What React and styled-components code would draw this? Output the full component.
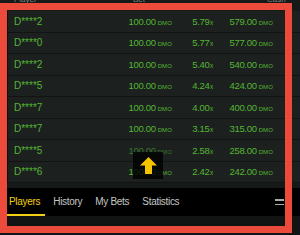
import React from "react";
import styled, { createGlobalStyle } from "styled-components";

const Global = createGlobalStyle`
  html, body { margin:0; padding:0; background:#151918; }
  body { font-family:"Liberation Sans",Arial,sans-serif; }
`;

const Page = styled.div`
  position:relative;
  width:300px;
  height:235px;
  overflow:hidden;
  background:#151918;
  display:flex;
  flex-direction:column;
`;

const HeadRow = styled.div`
  height:11px;
  display:flex;
  padding-left:14px;
  font-size:8px;
  line-height:8px;
  color:#7d8280;
  overflow:hidden;
`;

const HeadCell = styled.span`
  width:${p => p.w}px;
  margin-top:-4px;
`;

const Panel = styled.div`
  margin-left:7px;
  border-left:1px solid #0a0c0b;
  display:flex;
  flex-direction:column;
`;

const Row = styled.div`
  height:21.5px;
  box-sizing:border-box;
  border-bottom:1px solid #111413;
  background:#1c2120;
  display:grid;
  grid-template-columns:98px 60px 41px 60px;
  padding-left:6px;
  align-items:center;
  color:#55b533;
  font-size:9.5px;
  letter-spacing:-0.3px;
`;

const Cell = styled.span`
  text-align:${p => p.right ? "right" : "left"};
  white-space:nowrap;
  font-size:${p => p.name ? "10px" : "inherit"};
  letter-spacing:${p => p.name ? "0" : "inherit"};
  opacity:${p => p.dim ? 0.55 : 1};
`;

const Unit = styled.span`
  font-size:6px;
  margin-left:2px;
  letter-spacing:0.1px;
`;

const X = styled.span`
  font-size:6.5px;
  margin-left:0.5px;
`;

const Gap = styled.div`
  height:5px;
`;

const TabBar = styled.div`
  height:28px;
  background:#000;
  display:flex;
  align-items:center;
  gap:13px;
  padding-left:9px;
`;

const Tab = styled.span`
  position:relative;
  font-size:10px;
  letter-spacing:-0.3px;
  color:${p => p.active ? "#f2cf12" : "#c4c6c5"};
  line-height:28px;
  &::after{
    content:"";
    display:${p => p.active ? "block" : "none"};
    position:absolute;
    left:-5px;
    right:-5px;
    bottom:0;
    height:2px;
    background:#f2cf12;
  }
`;

const Burger = styled.div`
  margin-left:auto;
  margin-right:16px;
  width:9px;
  display:flex;
  flex-direction:column;
  gap:3px;
  span{ display:block; height:1.5px; background:#a9abaa; }
`;

const Bottom = styled.div`
  flex:1;
  background:#121414;
`;

const Frame = styled.div`
  position:absolute;
  left:0;
  top:3px;
  width:292px;
  height:230px;
  box-sizing:border-box;
  border:7px solid #ec4a3b;
  pointer-events:none;
`;

const Cursor = styled.div`
  position:absolute;
  left:133px;
  top:152px;
  width:30px;
  height:27px;
  background:rgba(0,0,0,0.82);
  display:flex;
  align-items:center;
  justify-content:center;
`;

const rows = [
  ["D****2","5.79","579.00"],
  ["D****0","5.77","577.00"],
  ["D****2","5.40","540.00"],
  ["D****5","4.24","424.00"],
  ["D****7","4.00","400.00"],
  ["D****7","3.15","315.00"],
  ["D****5","2.58","258.00"],
  ["D****6","2.42","242.00"],
];

export default function App(){
  return(
    <>
      <Global/>
      <Page>
        <HeadRow>
          <HeadCell w={119}>Player</HeadCell>
          <HeadCell w={134}>Bet</HeadCell>
          <HeadCell w={30}>Cash</HeadCell>
        </HeadRow>
        <Panel>
          {rows.map((r,i)=>(
            <Row key={i}>
              <Cell name>{r[0]}</Cell>
              <Cell right dim={i===6}>100.00<Unit>DMO</Unit></Cell>
              <Cell right>{r[1]}<X>x</X></Cell>
              <Cell right>{r[2]}<Unit>DMO</Unit></Cell>
            </Row>
          ))}
        </Panel>
        <Gap/>
        <TabBar>
          <Tab active>Players</Tab>
          <Tab>History</Tab>
          <Tab>My Bets</Tab>
          <Tab>Statistics</Tab>
          <Burger><span/><span/></Burger>
        </TabBar>
        <Bottom/>
        <Cursor>
          <svg width="17" height="17" viewBox="0 0 17 17">
            <path d="M8.5 0 L17 8.5 L12 8.5 L12 17 L5 17 L5 8.5 L0 8.5 Z" fill="#f5c400"/>
          </svg>
        </Cursor>
        <Frame/>
      </Page>
    </>
  )
}
